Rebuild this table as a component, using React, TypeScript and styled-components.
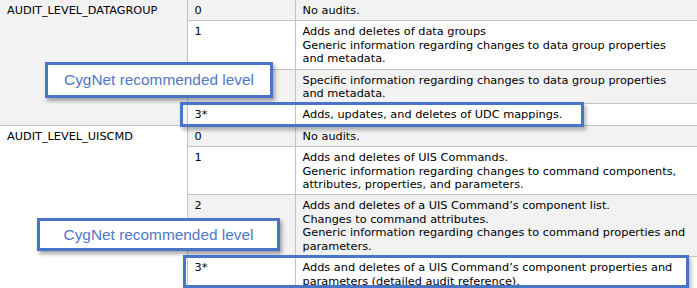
import React from "react";
import styled, { createGlobalStyle } from "styled-components";

const GlobalStyle = createGlobalStyle`
  html, body {
    margin: 0;
    padding: 0;
    background: #ffffff;
    overflow: hidden;
  }
`;

const Page = styled.div`
  position: relative;
  width: 697px;
  height: 288px;
  overflow: hidden;
`;

const AuditTable = styled.table`
  width: 697px;
  border-collapse: collapse;
  table-layout: fixed;
  font-family: Verdana, "DejaVu Sans", sans-serif;
  font-size: 11.3px;
  line-height: 13.4px;
  color: #000000;
`;

const Cell = styled.td<{ $shade?: boolean; $first?: boolean }>`
  vertical-align: top;
  padding: 4px 7px 3px 7px;
  background: ${(p) => (p.$shade ? "#f2f2f2" : "#ffffff")};
  border-bottom: 1px solid #c3c3c3;
  border-left: ${(p) => (p.$first ? "none" : "1px solid #c3c3c3")};
`;

// callout boxes sit over the table, so they are placed absolutely
const Callout = styled.div<{ $x: number; $y: number; $w: number; $h: number }>`
  position: absolute;
  left: ${(p) => p.$x}px;
  top: ${(p) => p.$y}px;
  width: ${(p) => p.$w}px;
  height: ${(p) => p.$h}px;
  box-sizing: border-box;
  border: 3px solid #4a74c8;
  background: #ffffff;
  box-shadow: 2px 3px 4px rgba(0, 0, 0, 0.35);
  display: flex;
  align-items: center;
  justify-content: center;
  font-family: "Liberation Sans", Arial, sans-serif;
  font-size: 15.4px;
  color: #5177c8;
`;

const Highlight = styled.div<{ $x: number; $y: number; $w: number; $h: number }>`
  position: absolute;
  left: ${(p) => p.$x}px;
  top: ${(p) => p.$y}px;
  width: ${(p) => p.$w}px;
  height: ${(p) => p.$h}px;
  box-sizing: border-box;
  border: 3px solid #4a74c8;
  box-shadow: 2px 3px 4px rgba(0, 0, 0, 0.3);
`;

type Level = { level: string; lines: string[] };

const groups: { name: string; shade: boolean; levels: Level[] }[] = [
  {
    name: "AUDIT_LEVEL_DATAGROUP",
    shade: true,
    levels: [
      { level: "0", lines: ["No audits."] },
      {
        level: "1",
        lines: [
          "Adds and deletes of data groups",
          "Generic information regarding changes to data group properties",
          "and metadata.",
        ],
      },
      {
        level: "2",
        lines: [
          "Specific information regarding changes to data group properties",
          "and metadata.",
        ],
      },
      { level: "3*", lines: ["Adds, updates, and deletes of UDC mappings."] },
    ],
  },
  {
    name: "AUDIT_LEVEL_UISCMD",
    shade: false,
    levels: [
      { level: "0", lines: ["No audits."] },
      {
        level: "1",
        lines: [
          "Adds and deletes of UIS Commands.",
          "Generic information regarding changes to command components,",
          "attributes, properties, and parameters.",
        ],
      },
      {
        level: "2",
        lines: [
          "Adds and deletes of a UIS Command\u2019s component list.",
          "Changes to command attributes.",
          "Generic information regarding changes to command properties and",
          "parameters.",
        ],
      },
      {
        level: "3*",
        lines: [
          "Adds and deletes of a UIS Command\u2019s component properties and",
          "parameters (detailed audit reference).",
        ],
      },
    ],
  },
];

export default function App() {
  return (
    <Page>
      <GlobalStyle />
      <AuditTable>
        <colgroup>
          <col style={{ width: 187 }} />
          <col style={{ width: 108 }} />
          <col />
        </colgroup>
        <tbody>
          {groups.map((g) =>
            g.levels.map((lv, i) => (
              <tr key={g.name + lv.level}>
                {i === 0 && (
                  <Cell $first $shade={g.shade} rowSpan={g.levels.length}>
                    {g.name}
                  </Cell>
                )}
                <Cell $shade={i % 2 === 0}>{lv.level}</Cell>
                <Cell $shade={i % 2 === 0}>
                  {lv.lines.map((line, j) => (
                    <React.Fragment key={j}>
                      {j > 0 && <br />}
                      {line}
                    </React.Fragment>
                  ))}
                </Cell>
              </tr>
            ))
          )}
        </tbody>
      </AuditTable>

      <Callout $x={45} $y={62} $w={228} $h={36}>
        CygNet recommended level
      </Callout>
      <Highlight $x={180} $y={102} $w={404} $h={25} />

      <Callout $x={37} $y={218} $w={243} $h={33}>
        CygNet recommended level
      </Callout>
      <Highlight $x={183} $y={255} $w={506} $h={33} />
    </Page>
  );
}
